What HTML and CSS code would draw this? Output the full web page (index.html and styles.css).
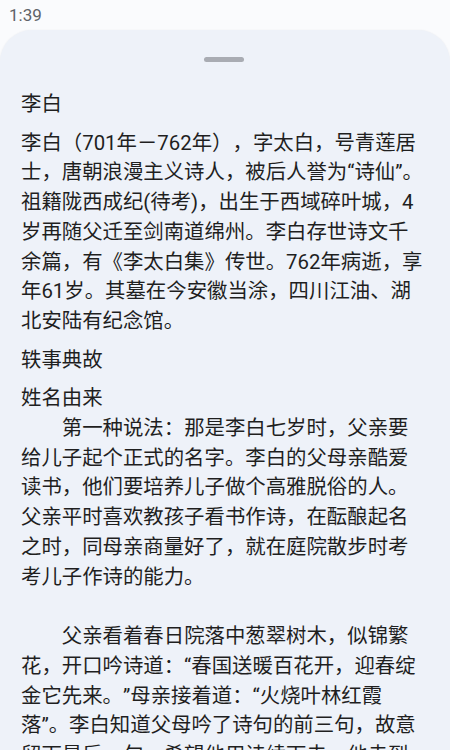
FILE: index.html
```html
<!DOCTYPE html>
<html lang="zh-CN">
<head>
    <meta charset="UTF-8">
    <meta name="viewport" content="width=device-width, initial-scale=1.0">
    <title>李白</title>
    <link rel="stylesheet" href="styles.css">
</head>
<body>
    <div class="status-bar">1:39</div>

    <div class="sheet">
        <div class="handle"></div>

        <div class="block">李白</div>
        <div class="block">李白（701年－762年），字太白，号青莲居士，唐朝浪漫主义诗人，被后人誉为“诗仙”。祖籍陇西成纪(待考)，出生于西域碎叶城，4岁再随父迁至剑南道绵州。李白存世诗文千余篇，有《李太白集》传世。762年病逝，享年61岁。其墓在今安徽当涂，四川江油、湖北安陆有纪念馆。</div>
        <div class="block">轶事典故</div>
        <div class="block">
            <div>姓名由来</div>
            <p class="story">第一种说法：那是李白七岁时，父亲要给儿子起个正式的名字。李白的父母亲酷爱读书，他们要培养儿子做个高雅脱俗的人。父亲平时喜欢教孩子看书作诗，在酝酿起名之时，同母亲商量好了，就在庭院散步时考考儿子作诗的能力。</p>
            <p class="story gap">父亲看着春日院落中葱翠树木，似锦繁花，开口吟诗道：“春国送暖百花开，迎春绽金它先来。”母亲接着道：“火烧叶林红霞落”。李白知道父母吟了诗句的前三句，故意留下最后一句，希望他用诗续下去，他走到正在开花的李树下，略加思索，脱口而出：“李花怒放一树白”。</p>
        </div>
    </div>
</body>
</html>
```

FILE: styles.css
```css
body {
    margin: 0;
    padding: 0;
    height: 750px;
    overflow: hidden;
    background-color: #fafbfd;
    font-family: Roboto, "Noto Sans CJK SC", sans-serif;
    display: flex;
    flex-direction: column;
}

.status-bar {
    height: 30px;
    line-height: 31px;
    padding-left: 9px;
    font-size: 17px;
    color: #5f6368;
}

.sheet {
    flex: 1;
    background-color: #eef2f9;
    border-radius: 32px 32px 0 0;
    box-shadow: 0 0 2px rgba(0, 0, 0, 0.06);
    padding: 0 24px 0 21px;
    font-size: 20.4px;
    line-height: 29.75px;
    color: #1f1f1f;
    text-spacing-trim: space-all;
}

.handle {
    width: 40px;
    height: 5px;
    margin: 27px auto 28px;
    border-radius: 3px;
    background-color: #a9acb3;
}

.block {
    margin-bottom: 8.75px;
}

.story {
    margin: 0;
    text-indent: 2em;
}

/* empty line between the two paragraphs */
.story.gap {
    margin-top: 29.75px;
}
```
